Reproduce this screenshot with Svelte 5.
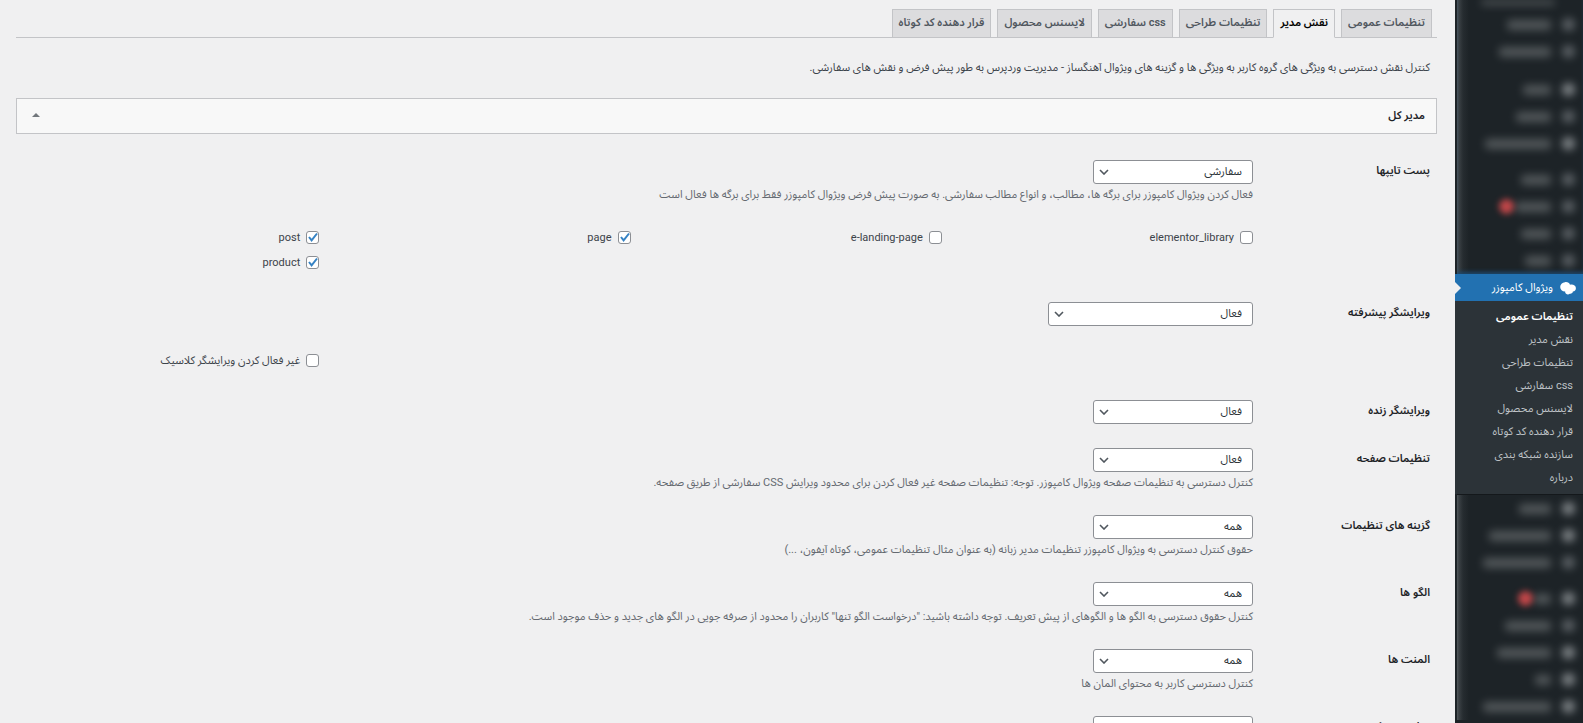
<script>
	const tabs = [
		'تنظیمات عمومی',
		'نقش مدیر',
		'تنظیمات طراحی',
		'css سفارشی',
		'لایسنس محصول',
		'قرار دهنده کد کوتاه'
	];
	let activeTab = $state(1);

	const submenu = [...tabs, 'سازنده شبکه بندی', 'درباره'];

	// Inactive menu entries: text width, badge flag and gap before the entry
	const menuTop = [
		{ width: 44 },
		{ width: 52 },
		{ width: 28, gap: 11, bright: true },
		{ width: 35 },
		{ width: 66, bright: true },
		{ width: 30, gap: 9 },
		{ width: 36, badge: true },
		{ width: 30 },
		{ width: 26 }
	];
	const menuBottom = [
		{ width: 32, bright: true },
		{ width: 62, bright: true },
		{ width: 68 },
		{ width: 17, gap: 9, badge: true, bright: true },
		{ width: 46 },
		{ width: 54, bright: true },
		{ width: 16, bright: true },
		{ width: 68, bright: true }
	];

	let open = $state(true);

	let rows = $state([
		{
			id: 'post_types',
			label: 'پست تایپها',
			value: 'سفارشی',
			options: ['سفارشی', 'همه', 'غیر فعال'],
			desc: 'فعال کردن ویژوال کامپوزر برای برگه ها، مطالب، و انواع مطالب سفارشی. به صورت پیش فرض ویژوال کامپوزر فقط برای برگه ها فعال است',
			checks: [
				{ name: 'elementor_library', on: false },
				{ name: 'e-landing-page', on: false },
				{ name: 'page', on: true },
				{ name: 'post', on: true },
				{ name: 'product', on: true }
			]
		},
		{
			id: 'backend_editor',
			label: 'ویرایشگر پیشرفته',
			value: 'فعال',
			options: ['فعال', 'غیر فعال'],
			wide: true,
			checks: [{ name: 'غیر فعال کردن ویرایشگر کلاسیک', on: false }]
		},
		{
			id: 'frontend_editor',
			label: 'ویرایشگر زنده',
			value: 'فعال',
			options: ['فعال', 'غیر فعال']
		},
		{
			id: 'page_settings',
			label: 'تنظیمات صفحه',
			value: 'فعال',
			options: ['فعال', 'غیر فعال'],
			desc: 'کنترل دسترسی به تنظیمات صفحه ویژوال کامپوزر. توجه: تنظیمات صفحه غیر فعال کردن برای محدود ویرایش CSS سفارشی از طریق صفحه.'
		},
		{
			id: 'settings',
			label: 'گزینه های تنظیمات',
			value: 'همه',
			options: ['همه', 'سفارشی', 'غیر فعال'],
			desc: 'حقوق کنترل دسترسی به ویژوال کامپوزر تنظیمات مدیر زبانه (به عنوان مثال تنظیمات عمومی، کوتاه آیفون، ...)'
		},
		{
			id: 'templates',
			label: 'الگو ها',
			value: 'همه',
			options: ['همه', 'درخواست الگو تنها', 'غیر فعال'],
			desc: 'کنترل حقوق دسترسی به الگو ها و الگوهای از پیش تعریف. توجه داشته باشید: "درخواست الگو تنها" کاربران را محدود از صرفه جویی در الگو های جدید و حذف موجود است.'
		},
		{
			id: 'shortcodes',
			label: 'المنت ها',
			value: 'همه',
			options: ['همه', 'ویرایش', 'سفارشی'],
			desc: 'کنترل دسترسی کاربر به محتوای المان ها'
		},
		{
			id: 'grid_builder',
			label: 'سازنده شبکه',
			value: 'فعال',
			options: ['فعال', 'غیر فعال']
		}
	]);
</script>

{#snippet blurred(items)}
	{#each items as item}
		{#if item.gap}
			<div class="separator" style="height: {item.gap}px"></div>
		{/if}
		<div class="blur-item" class:bright={item.bright}>
			<span class="blur-icon"></span>
			<span class="blur-text" style="width: {item.width}px"></span>
			{#if item.badge}
				<span class="blur-badge"></span>
			{/if}
		</div>
	{/each}
{/snippet}

<div class="page" dir="rtl">
	<nav class="sidebar">
		<div class="menu-group upper">
			<div class="blur-item cut">
				<span class="blur-text"></span>
			</div>
			{@render blurred(menuTop)}
		</div>

		<a class="current" href="#composer">
			<svg width="16" height="14" viewBox="0 0 16 14" aria-hidden="true">
				<path
					fill="#fff"
					d="M5 1.200C7.400.8 9.400 1.900 10 3.700c2.800-.8 5.800.7 5.900 3.300.1 2-1.300 3.400-3 3.600-.1 1.500-1.600 2.500-3.100 2.200-1.100.9-2.800.8-3.700-.1-.8-.6-1-1.300-.9-2.200C2.400 10.600.2 8.800.2 6c0-2.500 2-4.500 4.800-4.800z"
				/>
			</svg>
			<span>ویژوال کامپوزر</span>
		</a>
		<ul class="submenu">
			{#each submenu as item, i}
				<li><a href="#sub-{i}" class:selected={i === 0}>{item}</a></li>
			{/each}
		</ul>

		<div class="menu-group lower">
			{@render blurred(menuBottom)}
		</div>
	</nav>

	<main>
		<div class="tabs">
			{#each tabs as tab, i}
				<button type="button" class:active={i === activeTab} onclick={() => (activeTab = i)}>{tab}</button>
			{/each}
		</div>

		<p class="intro">
			کنترل نقش دسترسی به ویژگی های گروه کاربر به ویژگی ها و گزینه های ویژوال آهنگساز - مدیریت وردپرس به طور پیش فرض و نقش های سفارشی.
		</p>

		<button type="button" class="accordion" aria-expanded={open} onclick={() => (open = !open)}>
			<span>مدیر کل</span>
			<svg class:flipped={!open} width="8" height="4" viewBox="0 0 8 4" aria-hidden="true">
				<path d="M0 4 4 0l4 4z" fill="#72777c" />
			</svg>
		</button>

		{#if open}
			<form>
				{#each rows as row}
					<div class="row">
						<label class="row-label" for={row.id}>{row.label}</label>
						<div class="field">
							<div class="select" class:wide={row.wide}>
								<select id={row.id} bind:value={row.value}>
									{#each row.options as option}
										<option>{option}</option>
									{/each}
								</select>
								<svg width="10" height="6" viewBox="0 0 10 6" aria-hidden="true">
									<path d="M1 1l4 4 4-4" fill="none" stroke="#50575e" stroke-width="1.600" />
								</svg>
							</div>
							{#if row.desc}
								<p class="desc">{row.desc}</p>
							{/if}
							{#if row.checks}
								<div class="checks" class:single={row.checks.length === 1}>
									{#each row.checks as check, i}
										<label class="check" class:last-col={i === 4}>
											<span class="box">
												<input type="checkbox" bind:checked={check.on} />
												{#if check.on}
													<svg width="11" height="11" viewBox="0 0 11 11" aria-hidden="true">
														<path d="M2 5l2.600 3.300L10 1.500" fill="none" stroke="#3582c4" stroke-width="2" />
													</svg>
												{/if}
											</span>
											<span>{check.name}</span>
										</label>
									{/each}
								</div>
							{/if}
						</div>
					</div>
				{/each}
			</form>
		{/if}
	</main>
</div>

<style>
	:global(body) {
		background: #f0f0f1;
	}

	.page {
		display: flex;
		height: 100vh;
		overflow: hidden;
		background: #f0f0f1;
		color: #3c434a;
		font-family: Roboto, 'Noto Sans Arabic', 'DejaVu Sans', sans-serif;
		font-size: 11px;
	}

	button,
	select {
		font: inherit;
		color: inherit;
	}

	/* ===== SIDEBAR ===== */
	.sidebar {
		flex: none;
		width: 128px;
		background: #1d2327;
	}

	.menu-group {
		margin-left: 2px;
		padding-right: 8px;
		overflow: hidden;
		background: linear-gradient(to right, #50575b 0, #3a4044 2px, #262c30 6px, #1d2327 12px);
	}

	.upper {
		box-shadow: inset 0 -4px 4px -2px #1d4a70;
	}

	.lower {
		border-top: 1px solid #14181b;
	}

	.blur-item {
		display: flex;
		align-items: center;
		gap: 11px;
		height: 27px;
	}

	.blur-icon {
		width: 13px;
		height: 13px;
		border-radius: 50%;
		background: #6c7276;
		filter: blur(4px);
		opacity: 0.8;
	}

	.blur-text {
		height: 10px;
		background: #757a7c;
		border-radius: 4px;
		filter: blur(4px);
		opacity: 0.6;
	}

	.bright .blur-icon {
		background: #9ca1a4;
	}

	.blur-badge {
		width: 15px;
		height: 15px;
		margin-right: -10px;
		border-radius: 50%;
		background: #d04a4c;
		filter: blur(3px);
		opacity: 0.9;
	}

	.cut {
		align-items: flex-start;
		height: 11px;
		padding-right: 20px;
	}

	.cut .blur-text {
		width: 74px;
		height: 5px;
	}

	.current {
		display: flex;
		align-items: center;
		gap: 7px;
		height: 27px;
		padding-right: 7px;
		background: #2271b1;
		color: #fff;
		text-decoration: none;
	}

	.current::after {
		content: '';
		margin-right: auto;
		border: 6px solid transparent;
		border-left-color: #f0f0f1;
		border-right-width: 0;
	}

	.submenu {
		margin: 0;
		padding: 4px 10px 5px;
		list-style: none;
		background: #2c3338;
	}

	.submenu a {
		display: block;
		line-height: 23px;
		color: #bec2c6;
		text-decoration: none;
		white-space: nowrap;
	}

	.submenu .selected {
		color: #fff;
		font-weight: 600;
	}

	/* ===== CONTENT ===== */
	main {
		flex: 1;
		min-width: 0;
		padding: 9px 18px 0 16px;
	}

	.tabs {
		display: flex;
		gap: 6px;
		padding-right: 5px;
		border-bottom: 1px solid #c3c4c7;
	}

	.tabs button {
		height: 29px;
		margin-bottom: -1px;
		padding: 0 6px 2px;
		border: 1px solid #c3c4c7;
		background: #dcdcde;
		color: #50575e;
		font-weight: 600;
		white-space: nowrap;
	}

	.tabs .active {
		border-bottom-color: #f0f0f1;
		background: #f0f0f1;
		color: #000;
	}

	.intro {
		margin: 20px 7px;
		line-height: 20px;
	}

	.accordion {
		display: flex;
		align-items: center;
		justify-content: space-between;
		width: 100%;
		height: 36px;
		padding: 0 11px 2px 15px;
		border: 1px solid #c3c4c7;
		background: #f8f8f8;
		color: #1d2327;
		font-weight: 600;
	}

	.flipped {
		transform: rotate(180deg);
	}

	form {
		padding-top: 14px;
	}

	.row {
		display: flex;
		padding: 12px 0;
	}

	.row-label {
		flex: none;
		box-sizing: border-box;
		width: 184px;
		padding-right: 7px;
		line-height: 22px;
		color: #1d2327;
		font-weight: 600;
	}

	.field {
		flex: 1;
		min-width: 0;
	}

	.select {
		display: grid;
		width: 160px;
	}

	.wide {
		width: 205px;
	}

	.select select,
	.select svg {
		grid-area: 1 / 1;
	}

	.select svg {
		place-self: center end;
		margin-left: 6px;
		pointer-events: none;
	}

	select {
		appearance: none;
		box-sizing: border-box;
		width: 100%;
		height: 24px;
		padding: 0 10px 2px 20px;
		border: 1px solid #8c8f94;
		border-radius: 3px;
		background: #fff;
		color: #2c3338;
	}

	.desc {
		margin: 1px 0 -1px;
		line-height: 19px;
		color: #646970;
		white-space: nowrap;
	}

	.checks {
		display: grid;
		grid-template-columns: repeat(4, 1fr);
		column-gap: 8px;
		padding: 22px 0 3px;
	}

	.check {
		display: flex;
		align-items: center;
		gap: 6px;
		height: 25px;
	}

	.last-col,
	.single .check {
		grid-column: 4;
	}

	.box {
		display: grid;
		place-items: center;
	}

	.box > * {
		grid-area: 1 / 1;
		pointer-events: none;
	}

	.box input {
		appearance: none;
		box-sizing: border-box;
		width: 13px;
		height: 13px;
		margin: 0;
		border: 1px solid #8c8f94;
		border-radius: 3px;
		background: #fff;
		pointer-events: auto;
	}

	.box svg {
		z-index: 1;
	}
</style>
